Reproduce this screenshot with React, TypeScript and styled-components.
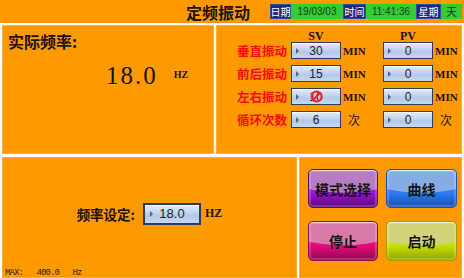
import styled, { createGlobalStyle } from 'styled-components';

const GlobalStyle = createGlobalStyle`
  html, body {
    margin: 0;
    padding: 0;
    background: #ffffff;
  }
`;

const CJK = `"Noto Sans CJK SC", "Noto Sans", sans-serif`;
const LATIN_SERIF = `"Liberation Serif", "Noto Sans CJK SC", serif`;

type Row = {
  label: string;
  sv: string;
  pv: string;
  unit: string;
  blocked?: boolean;
};

const rows: Row[] = [
  { label: '垂直振动', sv: '30', pv: '0', unit: 'MIN' },
  { label: '前后振动', sv: '15', pv: '0', unit: 'MIN' },
  { label: '左右振动', sv: '10', pv: '0', unit: 'MIN', blocked: true },
  { label: '循环次数', sv: '6', pv: '0', unit: '次' },
];

type Tone = 'purple' | 'blue' | 'pink' | 'lime';

const tones: Record<Tone, { top: string; bottom: string; edge: string }> = {
  purple: { top: '#b67cc4', bottom: '#a012dc', edge: '#5e0a78' },
  blue: { top: '#86ace4', bottom: '#2a7ef2', edge: '#1a4fb8' },
  pink: { top: '#d67aa6', bottom: '#ec0a7e', edge: '#8c0a50' },
  lime: { top: '#d2d27a', bottom: '#c6e402', edge: '#96a404' },
};

const buttons: { text: string; tone: Tone }[] = [
  { text: '模式选择', tone: 'purple' },
  { text: '曲线', tone: 'blue' },
  { text: '停止', tone: 'pink' },
  { text: '启动', tone: 'lime' },
];

function NoEntry() {
  return (
    <Blocked width="13" height="13" viewBox="0 0 13 13">
      <circle cx="6.5" cy="6.5" r="5" fill="none" stroke="#ff1e1e" strokeWidth="1.8" />
      <line x1="3" y1="10" x2="10" y2="3" stroke="#ff1e1e" strokeWidth="1.8" />
    </Blocked>
  );
}

export default function App() {
  return (
    <>
      <GlobalStyle />
      <Screen>
        <Header>
          <Title>定频振动</Title>
          <Clock>
            <Tag $width={21}>日期</Tag>
            <Reading $width={52}>19/03/03</Reading>
            <Tag $width={23}>时间</Tag>
            <Reading $width={50}>11:41:36</Reading>
            <Tag $width={25}>星期</Tag>
            <Reading $width={21} $cjk>
              天
            </Reading>
          </Clock>
        </Header>

        <Body>
          <PanelRow>
            <Panel $width={212}>
              <Heading>实际频率:</Heading>
              <Actual>
                <BigNumber>18.0</BigNumber>
                <SmallUnit>HZ</SmallUnit>
              </Actual>
            </Panel>

            <Panel $width={246}>
              <ColHeads>
                <span />
                <ColHead>SV</ColHead>
                <span />
                <ColHead>PV</ColHead>
                <span />
              </ColHeads>
              <Table>
                {rows.map((row) => (
                  <Line key={row.label}>
                    <RowLabel>{row.label}</RowLabel>
                    <Field>
                      {row.sv}
                      {row.blocked && <NoEntry />}
                    </Field>
                    <Unit $cjk={row.unit === '次'}>{row.unit}</Unit>
                    <Field>{row.pv}</Field>
                    <Unit $cjk={row.unit === '次'}>{row.unit}</Unit>
                  </Line>
                ))}
              </Table>
            </Panel>
          </PanelRow>

          <PanelRow>
            <Panel $width={295}>
              <Setting>
                <SettingLabel>频率设定:</SettingLabel>
                <Field $large>18.0</Field>
                <SettingUnit>HZ</SettingUnit>
              </Setting>
              <Limit>{'MAX:   400.0   Hz'}</Limit>
            </Panel>

            <Panel $width={163}>
              <Buttons>
                {buttons.map((b) => (
                  <GlossButton key={b.text} $tone={b.tone}>
                    {b.text}
                  </GlossButton>
                ))}
              </Buttons>
            </Panel>
          </PanelRow>
        </Body>
      </Screen>
    </>
  );
}

const Screen = styled.div`
  width: 464px;
  height: 278px;
  background: #ffffff;
  display: flex;
  flex-direction: column;
  overflow: hidden;
`;

const Header = styled.div`
  height: 23px;
  flex: none;
  background: #ff9900;
  display: flex;
  align-items: center;
  justify-content: flex-end;
  padding-right: 2px;
`;

const Title = styled.div`
  font-family: ${CJK};
  font-weight: 700;
  font-size: 16px;
  line-height: 18px;
  color: #1a1200;
  margin-right: 20px;
`;

const Clock = styled.div`
  display: flex;
  height: 15px;
  margin-top: -1px;
`;

const Tag = styled.div<{ $width: number }>`
  width: ${({ $width }) => $width}px;
  background: #1f2878;
  border: 1px solid #3a4aa0;
  box-sizing: border-box;
  color: #ffffff;
  font-family: ${CJK};
  font-size: 10px;
  line-height: 13px;
  white-space: nowrap;
  display: flex;
  justify-content: center;
`;

const Reading = styled.div<{ $width: number; $cjk?: boolean }>`
  width: ${({ $width }) => $width}px;
  background: #33cc33;
  color: #173d17;
  font-family: ${({ $cjk }) => ($cjk ? CJK : `"Liberation Sans", sans-serif`)};
  font-size: ${({ $cjk }) => ($cjk ? 11 : 10)}px;
  line-height: 15px;
  text-align: center;
`;

const Body = styled.div`
  flex: 1;
  display: grid;
  grid-template-rows: 129px 1fr;
  row-gap: 3px;
  padding: 2px 2px 0 2px;
`;

const PanelRow = styled.div`
  display: flex;
  gap: 2px;
  min-height: 0;
`;

const Panel = styled.div<{ $width: number }>`
  width: ${({ $width }) => $width}px;
  flex: none;
  background: #ff9900;
  box-shadow: inset 0 0 0 1px #ffae3a;
  display: flex;
  flex-direction: column;
  position: relative;
`;

const Heading = styled.div`
  font-family: ${CJK};
  font-weight: 700;
  font-size: 16px;
  line-height: 18px;
  color: #1a1200;
  padding: 7px 0 0 6px;
`;

const Actual = styled.div`
  display: flex;
  align-items: baseline;
  padding: 12px 0 0 104px;
`;

const BigNumber = styled.span`
  font-family: "Liberation Serif", serif;
  font-size: 25px;
  letter-spacing: 2px;
  color: #1a1200;
`;

const SmallUnit = styled.span`
  font-family: "Liberation Serif", serif;
  font-weight: 700;
  font-size: 10px;
  color: #1a1200;
  margin-left: 16px;
  position: relative;
  top: -6px;
`;

const columns = `75px 50px 42px 50px 1fr`;

const ColHeads = styled.div`
  display: grid;
  grid-template-columns: ${columns};
  height: 17px;
  align-items: end;
`;

const ColHead = styled.div`
  font-family: ${LATIN_SERIF};
  font-weight: 700;
  font-size: 12px;
  line-height: 12px;
  color: #1a1200;
  text-align: center;
`;

const Table = styled.div`
  display: flex;
  flex-direction: column;
  gap: 6px;
`;

const Line = styled.div`
  display: grid;
  grid-template-columns: ${columns};
  height: 17px;
  align-items: center;
`;

const RowLabel = styled.div`
  font-family: ${CJK};
  font-weight: 700;
  font-size: 12.5px;
  line-height: 17px;
  color: #ff0a0a;
  text-align: right;
  padding-right: 4px;
`;

const Field = styled.div<{ $large?: boolean }>`
  position: relative;
  box-sizing: border-box;
  width: ${({ $large }) => ($large ? 58 : 50)}px;
  height: ${({ $large }) => ($large ? 22 : 17)}px;
  border: ${({ $large }) => ($large ? 2 : 1)}px solid #2e3b58;
  background: linear-gradient(#e4edf9 0%, #c4d6ef 40%, #b2c9e8 60%, #c8d9f0 100%);
  box-shadow: inset 0 1px 0 #f4f8ff;
  display: flex;
  align-items: center;
  justify-content: center;
  font-family: "Liberation Sans", sans-serif;
  font-size: ${({ $large }) => ($large ? 13 : 12)}px;
  color: #1c2030;

  &::before {
    content: '';
    position: absolute;
    left: ${({ $large }) => ($large ? 5 : 4)}px;
    top: 50%;
    margin-top: -3px;
    border-left: 3px solid #5a6478;
    border-top: 3px solid transparent;
    border-bottom: 3px solid transparent;
  }
`;

const Blocked = styled.svg`
  position: absolute;
  left: 50%;
  top: 50%;
  margin: -6.5px 0 0 -6.5px;
`;

const Unit = styled.div<{ $cjk?: boolean }>`
  width: 22px;
  margin-left: 2px;
  text-align: center;
  font-family: ${({ $cjk }) => ($cjk ? CJK : LATIN_SERIF)};
  font-weight: ${({ $cjk }) => ($cjk ? 400 : 700)};
  font-size: ${({ $cjk }) => ($cjk ? 12 : 11)}px;
  color: #1a1200;
`;

const Setting = styled.div`
  flex: 1;
  display: flex;
  align-items: center;
  justify-content: center;
  padding-top: 2px;
`;

const SettingLabel = styled.span`
  font-family: ${CJK};
  font-weight: 700;
  font-size: 13.5px;
  color: #1a1200;
  margin-right: 8px;
`;

const SettingUnit = styled.span`
  font-family: ${LATIN_SERIF};
  font-weight: 700;
  font-size: 12px;
  color: #1a1200;
  margin-left: 4px;
`;

const Limit = styled.div`
  font-family: "Liberation Mono", monospace;
  font-size: 9px;
  letter-spacing: -0.9px;
  line-height: 10px;
  white-space: pre;
  color: #2a1e00;
  padding: 0 0 0 3px;
`;

const Buttons = styled.div`
  display: grid;
  grid-template-columns: 70px 71px;
  grid-template-rows: 39px 40px;
  gap: 13px 8px;
  padding: 12px 0 0 9px;
`;

const GlossButton = styled.div<{ $tone: Tone }>`
  box-sizing: border-box;
  border-radius: 5px;
  border: 1px solid ${({ $tone }) => tones[$tone].edge};
  background:
    radial-gradient(ellipse 95% 62% at 50% 0%, ${({ $tone }) => tones[$tone].top} 97%, transparent 100%),
    linear-gradient(${({ $tone }) => tones[$tone].bottom} 60%, ${({ $tone }) => tones[$tone].edge} 100%);
  box-shadow: inset 0 1px 0 rgba(255, 255, 255, 0.7), inset 0 0 0 2px rgba(255, 255, 255, 0.18);
  display: flex;
  align-items: center;
  justify-content: center;
  font-family: ${CJK};
  font-weight: 700;
  font-size: 14px;
  color: #141414;
`;
